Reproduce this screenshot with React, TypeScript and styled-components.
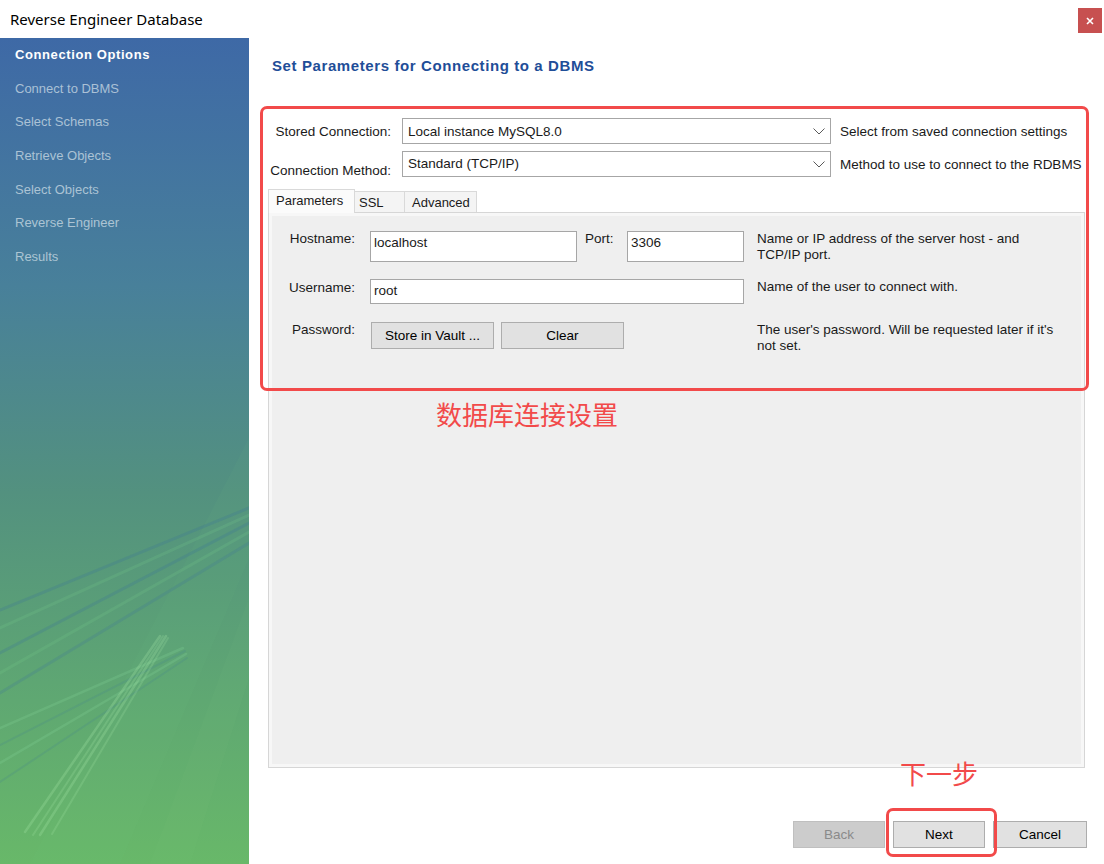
import React from 'react';
import styled, { createGlobalStyle } from 'styled-components';

const GlobalStyle = createGlobalStyle`
  html, body {
    margin: 0;
    padding: 0;
    background: #ffffff;
  }
  body {
    font-family: 'Liberation Sans', Arial, sans-serif;
    font-size: 13.5px;
    color: #1a1a1a;
  }
`;

const RED = '#f24a4a';

const Window = styled.div`
  width: 1104px;
  height: 864px;
  display: flex;
  flex-direction: column;
  overflow: hidden;
  background: #ffffff;
`;

const TitleBar = styled.div`
  height: 38px;
  flex: none;
  display: flex;
  align-items: center;
  justify-content: space-between;
  padding: 0 2px 0 10px;
`;

const Title = styled.span`
  font-family: 'Noto Sans', 'Liberation Sans', sans-serif;
  font-size: 15px;
  color: #000;
`;

const CloseButton = styled.div`
  width: 24px;
  height: 25px;
  margin-top: 3px;
  background: #c75050;
  display: flex;
  align-items: center;
  justify-content: center;
`;

const Body = styled.div`
  flex: 1;
  display: flex;
  min-height: 0;
`;

const Sidebar = styled.div`
  width: 249px;
  flex: none;
  position: relative;
  overflow: hidden;
  background: linear-gradient(
    180deg,
    #3e69a6 0%,
    #48809a 30%,
    #53917f 55%,
    #5ea673 78%,
    #68b869 100%
  );
`;

const SidebarArt = styled.svg`
  position: absolute;
  left: 0;
  top: 0;
  width: 249px;
  height: 826px;
`;

const StepList = styled.ul`
  position: relative;
  list-style: none;
  margin: 0;
  padding: 0 0 0 15px;
`;

const Step = styled.li<{ $active?: boolean }>`
  height: 33.7px;
  line-height: 33.7px;
  font-size: 13px;
  font-weight: ${p => (p.$active ? 700 : 400)};
  letter-spacing: ${p => (p.$active ? '0.6px' : '0')};
  color: ${p => (p.$active ? '#ffffff' : 'rgba(214, 226, 234, 0.72)')};
  white-space: nowrap;
`;

const Main = styled.div`
  flex: 1;
  display: flex;
  flex-direction: column;
  padding: 0 19px;
  min-width: 0;
`;

const Header = styled.div`
  height: 68px;
  flex: none;
  padding: 18px 0 0 4px;
  box-sizing: border-box;
`;

const Heading = styled.h1`
  margin: 0;
  font-size: 15px;
  letter-spacing: 0.6px;
  line-height: 20px;
  font-weight: 700;
  color: #1f4e98;
`;

const FormArea = styled.div`
  position: relative;
  padding-top: 12px;
`;

const FieldRow = styled.div<{ $gap?: number }>`
  display: flex;
  align-items: center;
  height: 26px;
  margin-bottom: ${p => p.$gap ?? 0}px;
`;

const FieldLabel = styled.span<{ $shift?: number }>`
  width: 123px;
  flex: none;
  margin-right: 11px;
  text-align: right;
  white-space: nowrap;
  position: relative;
  top: ${p => p.$shift ?? 0}px;
`;

const Select = styled.div`
  width: 429px;
  height: 26px;
  box-sizing: border-box;
  flex: none;
  border: 1px solid #a6a6a6;
  background: #ffffff;
  display: flex;
  align-items: center;
  justify-content: space-between;
  padding: 0 5px 0 5px;
`;

const SelectText = styled.span<{ $shift?: number }>`
  position: relative;
  top: ${p => p.$shift ?? 0}px;
`;

const Hint = styled.span`
  margin-left: 9px;
  white-space: nowrap;
`;

const TabBar = styled.div`
  margin-top: 12px;
  height: 23px;
  display: flex;
  align-items: flex-end;
  font-size: 13px;
`;

const Tab = styled.div<{ $active?: boolean; $w: number; $pl: number }>`
  width: ${p => p.$w}px;
  height: ${p => (p.$active ? 24 : 21)}px;
  box-sizing: border-box;
  padding-left: ${p => p.$pl}px;
  line-height: ${p => (p.$active ? 22 : 21)}px;
  border: 1px solid #d9d9d9;
  border-bottom: none;
  border-left: ${p => (p.$active ? '1px solid #d9d9d9' : 'none')};
  background: ${p => (p.$active ? '#fbfbfb' : '#f4f4f4')};
  white-space: nowrap;
  margin-bottom: ${p => (p.$active ? -1 : 0)}px;
  position: relative;
  z-index: ${p => (p.$active ? 1 : 0)};
`;

const Panel = styled.div`
  height: 556px;
  box-sizing: border-box;
  border: 1px solid #d6d6d6;
  background: #efefef;
  box-shadow: inset 0 0 0 3px #f7f7f7;
  padding: 18px 0 0 19px;
`;

const ParamRow = styled.div<{ $gap?: number }>`
  display: flex;
  align-items: flex-start;
  margin-bottom: ${p => p.$gap ?? 0}px;
`;

const ParamLabel = styled.span<{ $pt?: number }>`
  width: 67px;
  flex: none;
  margin-right: 15px;
  text-align: right;
  line-height: 16px;
  padding-top: ${p => p.$pt ?? 0}px;
  white-space: nowrap;
`;

const TextBox = styled.div<{ $w: number; $h: number }>`
  width: ${p => p.$w}px;
  height: ${p => p.$h}px;
  box-sizing: border-box;
  flex: none;
  border: 1px solid #a6a6a6;
  background: #ffffff;
  padding: 3px 0 0 3px;
  line-height: 16px;
`;

const InlineLabel = styled.span`
  width: 31px;
  flex: none;
  margin: 0 11px 0 8px;
  line-height: 16px;
`;

const ParamHint = styled.div`
  margin-left: 13px;
  line-height: 16px;
  white-space: nowrap;
`;

const ButtonGroup = styled.div`
  width: 374px;
  flex: none;
  display: flex;
  gap: 7px;
  padding-left: 1px;
  box-sizing: border-box;
`;

const PushButton = styled.div<{ $w?: number; $disabled?: boolean }>`
  width: ${p => p.$w ?? 123}px;
  height: 27px;
  box-sizing: border-box;
  border: 1px solid ${p => (p.$disabled ? '#bfbfbf' : '#adadad')};
  background: ${p => (p.$disabled ? '#cccccc' : '#e1e1e1')};
  color: ${p => (p.$disabled ? '#8a8a8a' : '#000000')};
  display: flex;
  align-items: center;
  justify-content: center;
  flex: none;
`;

const Highlight = styled.div`
  position: absolute;
  left: -8px;
  top: 0;
  width: 829px;
  height: 285px;
  box-sizing: border-box;
  border: 3px solid ${RED};
  border-radius: 7px;
  pointer-events: none;
`;

const Annotation = styled.div`
  position: absolute;
  font-family: 'Noto Sans CJK SC', sans-serif;
  font-size: 26px;
  line-height: 30px;
  color: ${RED};
  white-space: nowrap;
`;

const Footer = styled.div`
  position: relative;
  height: 96px;
  flex: none;
  display: flex;
  justify-content: flex-end;
  align-items: flex-start;
  gap: 8px;
  padding-top: 53px;
  box-sizing: border-box;
  margin-right: -2px;
`;

const NextWrap = styled.div`
  position: relative;
`;

const NextRing = styled.div`
  position: absolute;
  left: -7px;
  top: -13px;
  right: -12px;
  bottom: -9px;
  border: 3px solid ${RED};
  border-radius: 7px;
`;

const steps = [
  'Connection Options',
  'Connect to DBMS',
  'Select Schemas',
  'Retrieve Objects',
  'Select Objects',
  'Reverse Engineer',
  'Results',
];

const Chevron = () => (
  <svg width="12" height="7" viewBox="0 0 12 7">
    <polyline points="0.5,0.5 6,6 11.5,0.5" fill="none" stroke="#5a5a5a" strokeWidth="1" />
  </svg>
);

const Streaks = () => (
  <SidebarArt viewBox="0 0 249 826">
    <polygon points="249,400 249,520 120,826 30,826" fill="rgba(120,200,130,0.06)" />
    <polygon points="249,560 249,640 190,826 150,826" fill="rgba(140,210,140,0.06)" />
    <g strokeLinecap="round">
      <line x1="249" y1="470" x2="0" y2="572" stroke="rgba(62,120,150,0.28)" strokeWidth="3" />
      <line x1="249" y1="477" x2="0" y2="590" stroke="rgba(120,205,140,0.2)" strokeWidth="3" />
      <line x1="249" y1="485" x2="0" y2="615" stroke="rgba(62,120,150,0.28)" strokeWidth="3" />
      <line x1="249" y1="494" x2="0" y2="635" stroke="rgba(120,205,140,0.2)" strokeWidth="3" />
      <line x1="249" y1="505" x2="0" y2="655" stroke="rgba(62,120,150,0.25)" strokeWidth="3" />
      <line x1="183" y1="610" x2="0" y2="690" stroke="rgba(130,210,150,0.25)" strokeWidth="2.5" />
      <line x1="185" y1="613" x2="0" y2="707" stroke="rgba(70,130,140,0.22)" strokeWidth="2" />
      <line x1="186" y1="616" x2="0" y2="725" stroke="rgba(130,210,150,0.25)" strokeWidth="2.5" />
      <line x1="187" y1="620" x2="0" y2="744" stroke="rgba(70,130,140,0.22)" strokeWidth="2" />
      <line x1="160" y1="598" x2="25" y2="794" stroke="rgba(170,235,170,0.25)" strokeWidth="2.5" />
      <line x1="163" y1="598" x2="33" y2="797" stroke="rgba(170,235,170,0.2)" strokeWidth="2" />
      <line x1="166" y1="598" x2="40" y2="797" stroke="rgba(170,235,170,0.25)" strokeWidth="2.5" />
      <line x1="168" y1="600" x2="52" y2="796" stroke="rgba(170,235,170,0.2)" strokeWidth="2" />
    </g>
  </SidebarArt>
);

export default function App() {
  return (
    <Window>
      <GlobalStyle />
      <TitleBar>
        <Title>Reverse Engineer Database</Title>
        <CloseButton>
          <svg width="8" height="8" viewBox="0 0 8 8">
            <path d="M1 1 L7 7 M7 1 L1 7" stroke="#ffffff" strokeWidth="1.6" />
          </svg>
        </CloseButton>
      </TitleBar>
      <Body>
        <Sidebar>
          <Streaks />
          <StepList>
            {steps.map((s, i) => (
              <Step key={s} $active={i === 0}>{s}</Step>
            ))}
          </StepList>
        </Sidebar>
        <Main>
          <Header>
            <Heading>Set Parameters for Connecting to a DBMS</Heading>
          </Header>
          <FormArea>
            <FieldRow $gap={7}>
              <FieldLabel>Stored Connection:</FieldLabel>
              <Select>
                <SelectText>Local instance MySQL8.0</SelectText>
                <Chevron />
              </Select>
              <Hint>Select from saved connection settings</Hint>
            </FieldRow>
            <FieldRow>
              <FieldLabel $shift={6}>Connection Method:</FieldLabel>
              <Select>
                <SelectText $shift={-1}>Standard (TCP/IP)</SelectText>
                <Chevron />
              </Select>
              <Hint>Method to use to connect to the RDBMS</Hint>
            </FieldRow>
            <TabBar>
              <Tab $active $w={87} $pl={7}>Parameters</Tab>
              <Tab $w={50} $pl={4}>SSL</Tab>
              <Tab $w={72} $pl={7}>Advanced</Tab>
            </TabBar>
            <Panel>
              <ParamRow $gap={16}>
                <ParamLabel>Hostname:</ParamLabel>
                <TextBox $w={207} $h={31}>localhost</TextBox>
                <InlineLabel>Port:</InlineLabel>
                <TextBox $w={117} $h={31}>3306</TextBox>
                <ParamHint>
                  Name or IP address of the server host - and
                  <br />
                  TCP/IP port.
                </ParamHint>
              </ParamRow>
              <ParamRow $gap={18}>
                <ParamLabel $pt={1}>Username:</ParamLabel>
                <TextBox $w={374} $h={25}>root</TextBox>
                <ParamHint>Name of the user to connect with.</ParamHint>
              </ParamRow>
              <ParamRow>
                <ParamLabel>Password:</ParamLabel>
                <ButtonGroup>
                  <PushButton>Store in Vault ...</PushButton>
                  <PushButton>Clear</PushButton>
                </ButtonGroup>
                <ParamHint>
                  The user's password. Will be requested later if it's
                  <br />
                  not set.
                </ParamHint>
              </ParamRow>
            </Panel>
            <Highlight />
            <Annotation style={{ left: 168, top: 293 }}>数据库连接设置</Annotation>
          </FormArea>
          <Footer>
            <Annotation style={{ left: 632, top: -10 }}>下一步</Annotation>
            <PushButton $w={92} $disabled>Back</PushButton>
            <NextWrap>
              <PushButton $w={92}>Next</PushButton>
              <NextRing />
            </NextWrap>
            <PushButton $w={94}>Cancel</PushButton>
          </Footer>
        </Main>
      </Body>
    </Window>
  );
}
